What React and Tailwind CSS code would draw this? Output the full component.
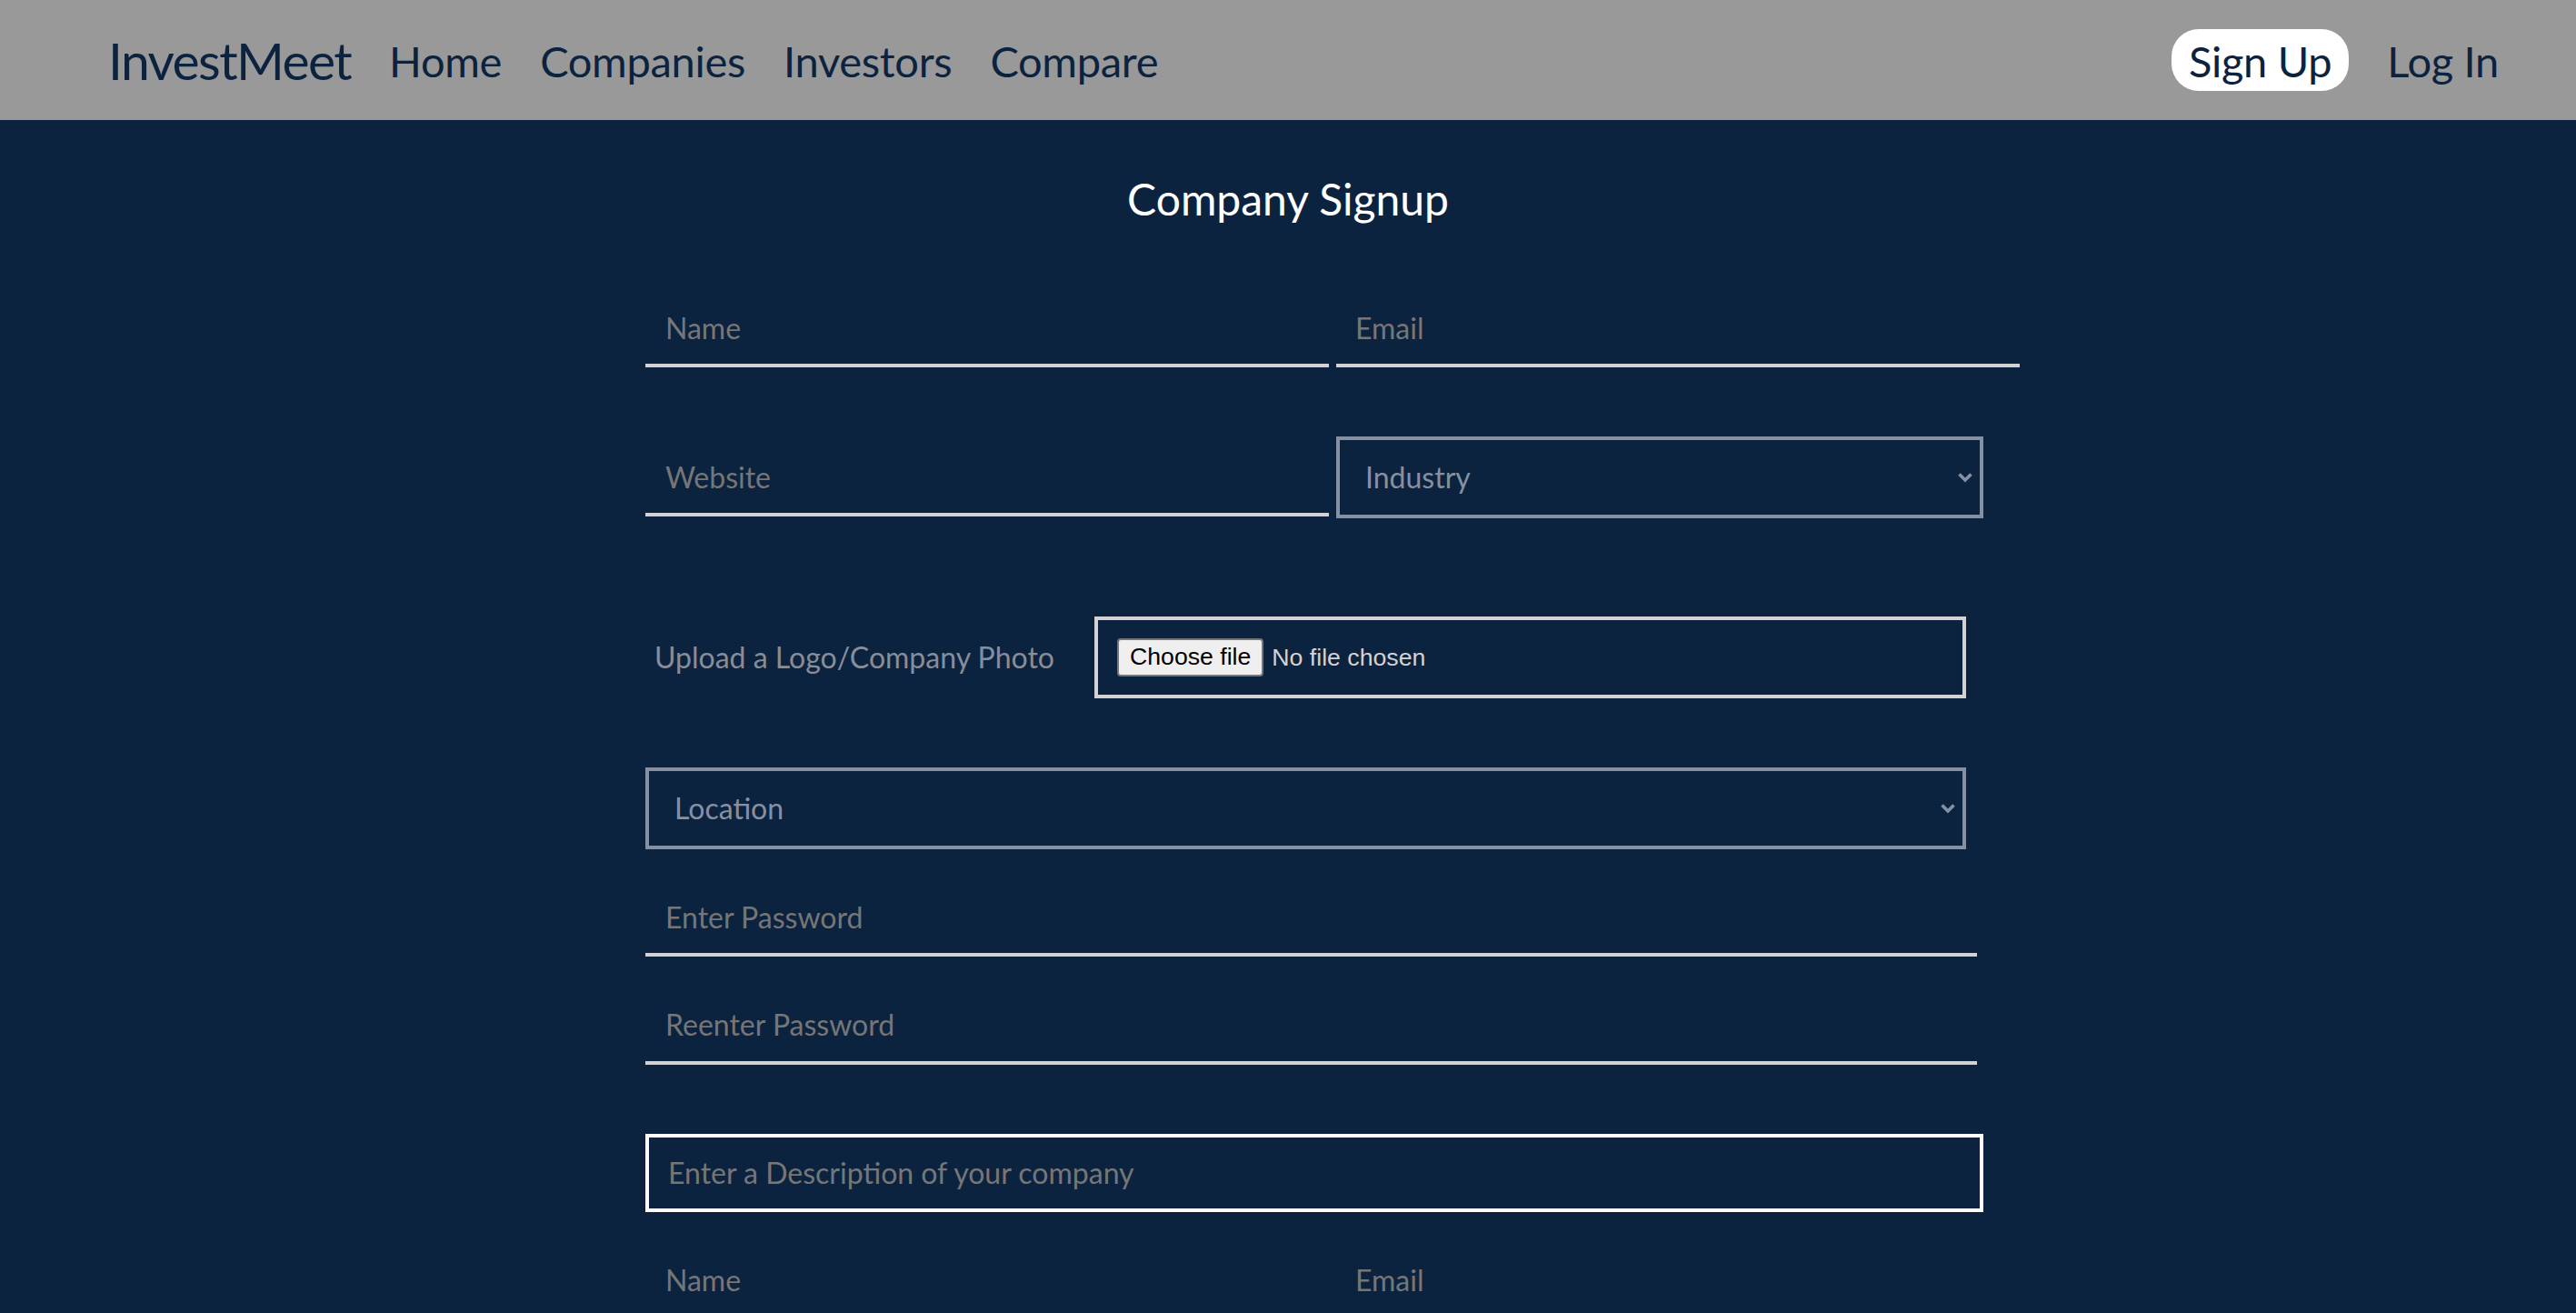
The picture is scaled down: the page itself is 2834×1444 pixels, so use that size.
import { useState } from "react";

const navLinks = ["Home", "Companies", "Investors", "Compare"];

const underline =
  "h-[85px] border-0 border-b-4 border-[#d3d3d3] bg-transparent text-[32px] text-white outline-none placeholder:text-[#767676]";

function Chevron() {
  return (
    <svg
      className="pointer-events-none absolute right-[11px] top-1/2 h-[12px] w-[18px] -translate-y-1/2"
      viewBox="0 0 18 12"
      fill="none"
    >
      <polyline points="2.5,2.5 9,9 15.5,2.5" stroke="#8591a3" strokeWidth="3.6" />
    </svg>
  );
}

function Dropdown({ label, width }) {
  return (
    <div className={`relative h-[90px] ${width}`}>
      <select className="h-full w-full appearance-none border-4 border-[#8591a3] bg-transparent pl-[28px] text-[32px] text-[#8591a3] outline-none">
        <option>{label}</option>
      </select>
      <Chevron />
    </div>
  );
}

function NameEmailRow() {
  return (
    <div className="flex gap-[8px]">
      <input className={`${underline} w-[752px] pl-[22px] pt-[2px]`} placeholder="Name" />
      <input className={`${underline} w-[752px] pl-[21px] pt-[2px]`} placeholder="Email" />
    </div>
  );
}

export default function App() {
  const [file] = useState(null);

  return (
    <div className="min-h-screen bg-[#0c2340] font-['Lato','Open_Sans',sans-serif]">
      {/* Navbar */}
      <nav className="flex h-[132px] items-center justify-between bg-[#999999] pl-[119px] pr-[85px] text-[#0c2340]">
        <div className="flex items-center gap-[42px]">
          <a className="text-[57px] leading-[1.2] tracking-[-1.6px]">InvestMeet</a>
          {navLinks.map((l) => (
            <a key={l} className="pt-[2px] text-[47px] leading-[1.2] tracking-[-0.3px]">
              {l}
            </a>
          ))}
        </div>
        <div className="flex items-center gap-[42px]">
          <a className="flex h-[68px] items-center rounded-[30px] bg-white px-[19px] pt-[2px] text-[47px] leading-[1.2] tracking-[-0.3px]">
            Sign Up
          </a>
          <a className="pt-[2px] text-[47px] leading-[1.2] tracking-[-0.3px]">Log In</a>
        </div>
      </nav>

      {/* Form */}
      <main className="pb-[40px]">
        <h1 className="pt-[58px] text-center text-[48px] leading-[1.2] text-white">Company Signup</h1>

        <form className="ml-[710px] mt-[71px] flex w-[1512px] flex-col">
          <NameEmailRow />

          <div className="mt-[75px] flex items-start gap-[8px]">
            <input className={`${underline} h-[89px] w-[752px] pl-[22px] pt-[6px]`} placeholder="Website" />
            <div className="mt-[1px]">
              <Dropdown label="Industry" width="w-[712px]" />
            </div>
          </div>

          <div className="mt-[108px] flex items-center">
            <label className="w-[494px] pl-[10px] text-[32px] text-[#878d99]">
              Upload a Logo/Company Photo
            </label>
            <div className="flex h-[90px] w-[959px] items-center gap-[9px] border-4 border-[#d3d3d3] pl-[21px] font-['Liberation_Sans',Arial,sans-serif] text-[26.67px]">
              <button
                type="button"
                className="h-[42px] rounded-[4px] border-2 border-[#767676] bg-[#efefef] px-[12px] leading-none text-black"
              >
                Choose file
              </button>
              <span className="text-[#d3d3d3]">{file ? file.name : "No file chosen"}</span>
            </div>
          </div>

          <div className="mt-[76px]">
            <Dropdown label="Location" width="w-[1453px]" />
          </div>

          <input className={`${underline} mt-[33px] w-[1465px] pl-[22px] pt-[2px]`} type="password" placeholder="Enter Password" />
          <input className={`${underline} mt-[34px] h-[84px] w-[1465px] pl-[22px]`} type="password" placeholder="Reenter Password" />

          <input
            className="mt-[76px] h-[86px] w-[1472px] border-4 border-white bg-transparent pl-[21px] text-[32px] text-white outline-none placeholder:text-[#767676]"
            placeholder="Enter a Description of your company"
          />

          <div className="mt-[33px]">
            <NameEmailRow />
          </div>
        </form>
      </main>
    </div>
  );
}
